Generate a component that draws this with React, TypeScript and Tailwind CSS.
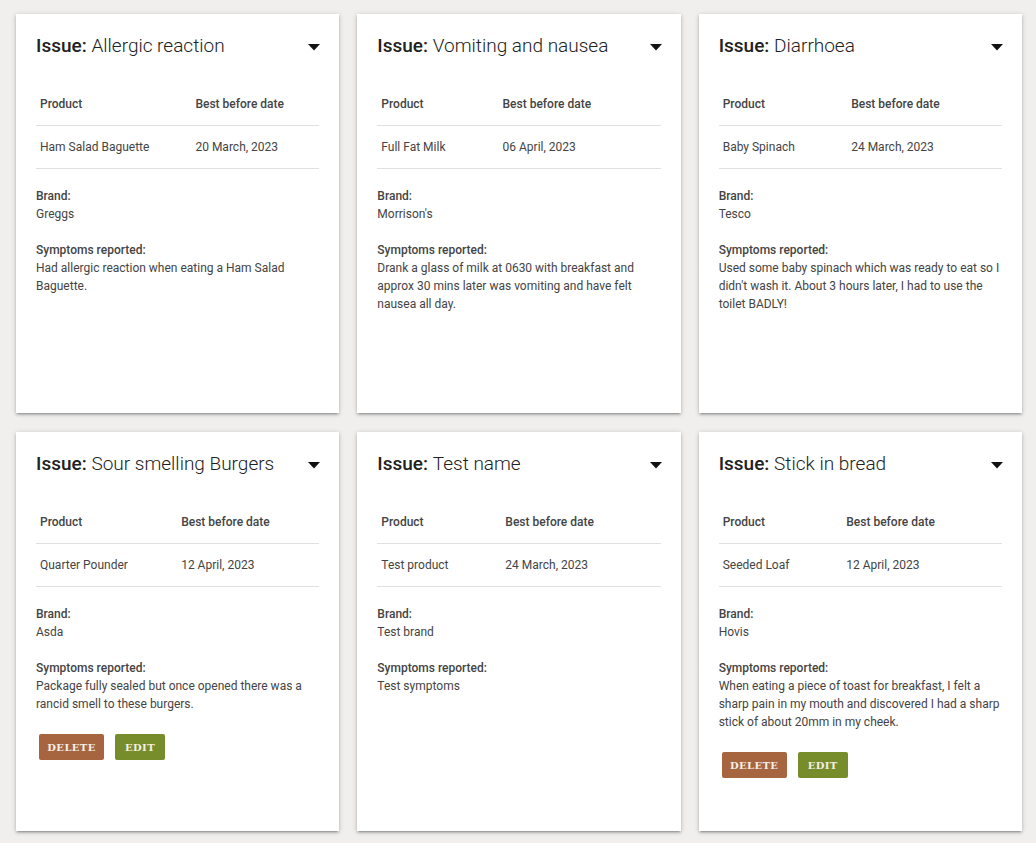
import React from 'react';

type Report = {
  issue: string;
  product: string;
  bestBefore: string;
  brand: string;
  symptoms: string;
  owned?: boolean;
};

const reports: Report[] = [
  {
    issue: 'Allergic reaction',
    product: 'Ham Salad Baguette',
    bestBefore: '20 March, 2023',
    brand: 'Greggs',
    symptoms: 'Had allergic reaction when eating a Ham Salad Baguette.',
  },
  {
    issue: 'Vomiting and nausea',
    product: 'Full Fat Milk',
    bestBefore: '06 April, 2023',
    brand: "Morrison's",
    symptoms:
      'Drank a glass of milk at 0630 with breakfast and approx 30 mins later was vomiting and have felt nausea all day.',
  },
  {
    issue: 'Diarrhoea',
    product: 'Baby Spinach',
    bestBefore: '24 March, 2023',
    brand: 'Tesco',
    symptoms:
      "Used some baby spinach which was ready to eat so I didn't wash it. About 3 hours later, I had to use the toilet BADLY!",
  },
  {
    issue: 'Sour smelling Burgers',
    product: 'Quarter Pounder',
    bestBefore: '12 April, 2023',
    brand: 'Asda',
    symptoms: 'Package fully sealed but once opened there was a rancid smell to these burgers.',
    owned: true,
  },
  {
    issue: 'Test name',
    product: 'Test product',
    bestBefore: '24 March, 2023',
    brand: 'Test brand',
    symptoms: 'Test symptoms',
  },
  {
    issue: 'Stick in bread',
    product: 'Seeded Loaf',
    bestBefore: '12 April, 2023',
    brand: 'Hovis',
    symptoms:
      'When eating a piece of toast for breakfast, I felt a sharp pain in my mouth and discovered I had a sharp stick of about 20mm in my cheek.',
    owned: true,
  },
];

const ReportCard = ({ report }: { report: Report }) => (
  <div className="h-[399px] bg-white px-5 pt-[18px] shadow-[0_2px_2px_0_rgba(0,0,0,0.14),0_3px_1px_-2px_rgba(0,0,0,0.12),0_1px_5px_0_rgba(0,0,0,0.2)]">
    <div className="flex items-center justify-between">
      <h2 className="text-[19px] leading-[28px] text-[#212121]">
        <span className="font-medium">Issue:</span>{' '}
        <span className="font-light">{report.issue}</span>
      </h2>
      <svg width="12" height="7" viewBox="0 0 12 7" className="mr-[-1px] mt-[2px] shrink-0" aria-hidden="true">
        <path d="M0 0h12L6 6.5z" fill="#111" />
      </svg>
    </div>

    <table className="mt-[23px] w-full border-collapse text-[12px] leading-[14px] text-[#444]">
      <thead>
        <tr className="border-b border-[#e0e0e0]">
          <th className="px-[4px] py-[14px] text-left font-medium">Product</th>
          <th className="px-[4px] py-[14px] text-left font-medium">Best before date</th>
        </tr>
      </thead>
      <tbody>
        <tr className="border-b border-[#e0e0e0]">
          <td className="px-[4px] py-[14px]">{report.product}</td>
          <td className="px-[4px] py-[14px]">{report.bestBefore}</td>
        </tr>
      </tbody>
    </table>

    <div className="mt-[18px] text-[12px] leading-[18px] text-[#444]">
      <p className="font-medium">Brand:</p>
      <p>{report.brand}</p>
      <p className="mt-[18px] font-medium">Symptoms reported:</p>
      <p>{report.symptoms}</p>
    </div>

    {report.owned && (
      <div className="ml-[3px] mt-[21px] flex gap-[11px]">
        <button className="h-[26px] w-[65px] rounded-[2px] bg-[#a6653f] text-[10px] font-semibold tracking-[0.4px] text-[#f5efe6] [font-family:'DejaVu_Serif',serif]">
          DELETE
        </button>
        <button className="h-[26px] w-[50px] rounded-[2px] bg-[#778c2a] text-[10px] font-semibold tracking-[0.4px] text-[#f5efe6] [font-family:'DejaVu_Serif',serif]">
          EDIT
        </button>
      </div>
    )}
  </div>
);

export default function App() {
  return (
    <div className="min-h-[843px] bg-[#f0efee] pl-4 pr-[14px] pt-[14px] font-['Roboto',sans-serif]">
      <div className="grid grid-cols-3 gap-x-[18px] gap-y-[19px]">
        {reports.map((r) => (
          <ReportCard key={r.issue} report={r} />
        ))}
      </div>
    </div>
  );
}
